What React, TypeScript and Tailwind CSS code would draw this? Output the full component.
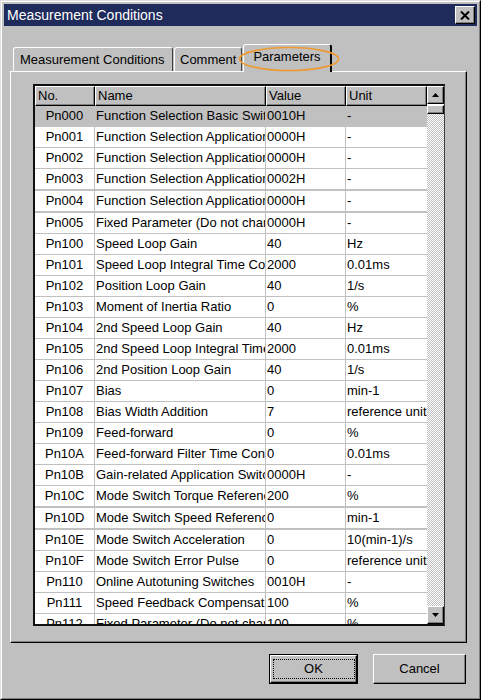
import React from 'react';

type Row = [string, string, string, string];

const rows: Row[] = [
  ['Pn000', 'Function Selection Basic Switches', '0010H', '-'],
  ['Pn001', 'Function Selection Application Switches 1', '0000H', '-'],
  ['Pn002', 'Function Selection Application Switches 2', '0000H', '-'],
  ['Pn003', 'Function Selection Application Switches 3', '0002H', '-'],
  ['Pn004', 'Function Selection Application Switches 4', '0000H', '-'],
  ['Pn005', 'Fixed Parameter (Do not change)', '0000H', '-'],
  ['Pn100', 'Speed Loop Gain', '40', 'Hz'],
  ['Pn101', 'Speed Loop Integral Time Constant', '2000', '0.01ms'],
  ['Pn102', 'Position Loop Gain', '40', '1/s'],
  ['Pn103', 'Moment of Inertia Ratio', '0', '%'],
  ['Pn104', '2nd Speed Loop Gain', '40', 'Hz'],
  ['Pn105', '2nd Speed Loop Integral Time Constant', '2000', '0.01ms'],
  ['Pn106', '2nd Position Loop Gain', '40', '1/s'],
  ['Pn107', 'Bias', '0', 'min-1'],
  ['Pn108', 'Bias Width Addition', '7', 'reference units'],
  ['Pn109', 'Feed-forward', '0', '%'],
  ['Pn10A', 'Feed-forward Filter Time Constant', '0', '0.01ms'],
  ['Pn10B', 'Gain-related Application Switches', '0000H', '-'],
  ['Pn10C', 'Mode Switch Torque Reference', '200', '%'],
  ['Pn10D', 'Mode Switch Speed Reference', '0', 'min-1'],
  ['Pn10E', 'Mode Switch Acceleration', '0', '10(min-1)/s'],
  ['Pn10F', 'Mode Switch Error Pulse', '0', 'reference units'],
  ['Pn110', 'Online Autotuning Switches', '0010H', '-'],
  ['Pn111', 'Speed Feedback Compensation', '100', '%'],
  ['Pn112', 'Fixed Parameter (Do not change)', '100', '%'],
];

// rows whose bottom grid line is drawn 2px in the screenshot
const thick = new Set(['Pn003', 'Pn004', 'Pn10C', 'Pn10D']);

const raised =
  'border-t border-l border-t-white border-l-white border-r border-b border-r-black border-b-black shadow-[inset_-1px_-1px_0_#808080]';

const Arrow = ({ up }: { up: boolean }) => (
  <svg width="7" height="4" viewBox="0 0 7 4">
    <polygon points={up ? '3.5,0 7,4 0,4' : '0,0 7,0 3.5,4'} fill="#000" />
  </svg>
);

const HeaderCell = ({ label, w }: { label: string; w: string }) => (
  <div className={`${w} h-full flex items-center pl-[2px] bg-[#c0c0c0] ${raised}`}>{label}</div>
);

const Cell = ({ text, className }: { text: string; className: string }) => (
  <div className={`flex items-center overflow-hidden ${className}`}>
    <span className="whitespace-nowrap">{text}</span>
  </div>
);

const App = () => {
  return (
    <div className="w-[481px] h-[700px] bg-[#c0c0c0] border border-[#dfdfdf] border-r-black border-b-black font-['Liberation_Sans',Arial,sans-serif] text-black">
      <div className="h-full border border-white border-r-[#808080] border-b-[#808080] p-[2px] flex flex-col">
        {/* title bar */}
        <div className="h-[22px] bg-[#1f2b5b] flex items-center justify-between pl-[3px] pr-[2px]">
          <span className="text-white text-[14px] leading-none">Measurement Conditions</span>
          <div className={`w-[20px] h-[18px] bg-[#c0c0c0] flex items-center justify-center ${raised}`}>
            <svg width="10" height="9" viewBox="0 0 10 9">
              <path d="M1 0.5 L9 8.5 M9 0.5 L1 8.5" stroke="#000" strokeWidth="2" />
            </svg>
          </div>
        </div>

        <div className="ml-[6px] w-[457px] mt-[18px]">
          {/* tabs */}
          <div className="flex items-end h-[27px] pl-[3px] text-[13px]">
            <div className="w-[160px] h-[24px] flex items-center pl-[6px] border-t border-l border-white border-r border-r-[#404040] rounded-t-[3px]">
              Measurement Conditions
            </div>
            <div className="w-[68px] h-[24px] ml-[1px] flex items-center pl-[5px] border-t border-l border-white border-r border-r-[#404040] rounded-t-[3px]">
              Comment
            </div>
            <div className="relative z-10 w-[89px] h-[28px] -mb-[1px] ml-[1px] bg-[#c0c0c0] flex items-center justify-center pb-[3px] border-t border-l border-white border-r-2 border-r-black rounded-t-[3px]">
              Parameters
              <svg className="absolute left-[-6px] top-[1px]" width="102" height="26" viewBox="0 0 102 26">
                <ellipse cx="51" cy="13" rx="49.5" ry="11.5" fill="none" stroke="#ee9a30" strokeWidth="1.6" />
              </svg>
            </div>
          </div>

          {/* panel */}
          <div className="h-[572px] border border-white border-r-black border-b-black shadow-[inset_-1px_-1px_0_#808080] pt-[12px] pl-[22px]">
            <div className="w-[412px] h-[542px] border-2 border-[#101010] border-r border-r-[#404040] flex bg-white text-[13px]">
              <div className="w-[392px] flex flex-col">
                <div className="h-[20px] flex">
                  <HeaderCell label="No." w="w-[60px]" />
                  <HeaderCell label="Name" w="w-[171px]" />
                  <HeaderCell label="Value" w="w-[80px]" />
                  <HeaderCell label="Unit" w="w-[81px]" />
                </div>
                <div className="h-[518px] overflow-hidden">
                  {rows.map(([no, name, value, unit], i) => (
                    <div
                      key={no}
                      className={`flex border-[#c0c0c0] ${thick.has(no) ? 'h-[22px] border-b-2' : 'h-[21px] border-b'} ${
                        i === 0 ? 'bg-[#c0c0c0]' : 'bg-white'
                      }`}
                    >
                      <Cell text={no} className="w-[60px] justify-center border-r border-[#c0c0c0]" />
                      <Cell text={name} className="w-[171px] pl-[1px] border-r border-[#c0c0c0]" />
                      <Cell text={value} className="w-[80px] pl-[1px] border-r border-[#c0c0c0]" />
                      <Cell text={unit} className="w-[81px] pl-[1px]" />
                    </div>
                  ))}
                </div>
              </div>

              {/* scrollbar */}
              <div className="w-[17px] flex flex-col">
                <div className={`h-[18px] bg-[#c0c0c0] flex items-center justify-center ${raised}`}>
                  <Arrow up />
                </div>
                <div className={`h-[9px] mt-[1px] bg-[#c0c0c0] ${raised}`} />
                <div className="flex-1 bg-[repeating-conic-gradient(#ffffff_0%_25%,#c0c0c0_0%_50%)] bg-[length:2px_2px]" />
                <div className={`h-[18px] bg-[#c0c0c0] flex items-center justify-center ${raised}`}>
                  <Arrow up={false} />
                </div>
              </div>
            </div>
          </div>

          {/* buttons */}
          <div className="flex justify-end gap-[15px] mt-[11px] pr-[1px] text-[13px]">
            <div className="w-[89px] h-[30px] border border-black">
              <div className={`h-full bg-[#c0c0c0] flex items-center justify-center ${raised}`}>
                <div className="w-[82px] h-[20px] border border-dotted border-black flex items-center justify-center">
                  OK
                </div>
              </div>
            </div>
            <div className={`w-[93px] h-[30px] bg-[#c0c0c0] flex items-center justify-center ${raised}`}>Cancel</div>
          </div>
        </div>
      </div>
    </div>
  );
};

export default App;
